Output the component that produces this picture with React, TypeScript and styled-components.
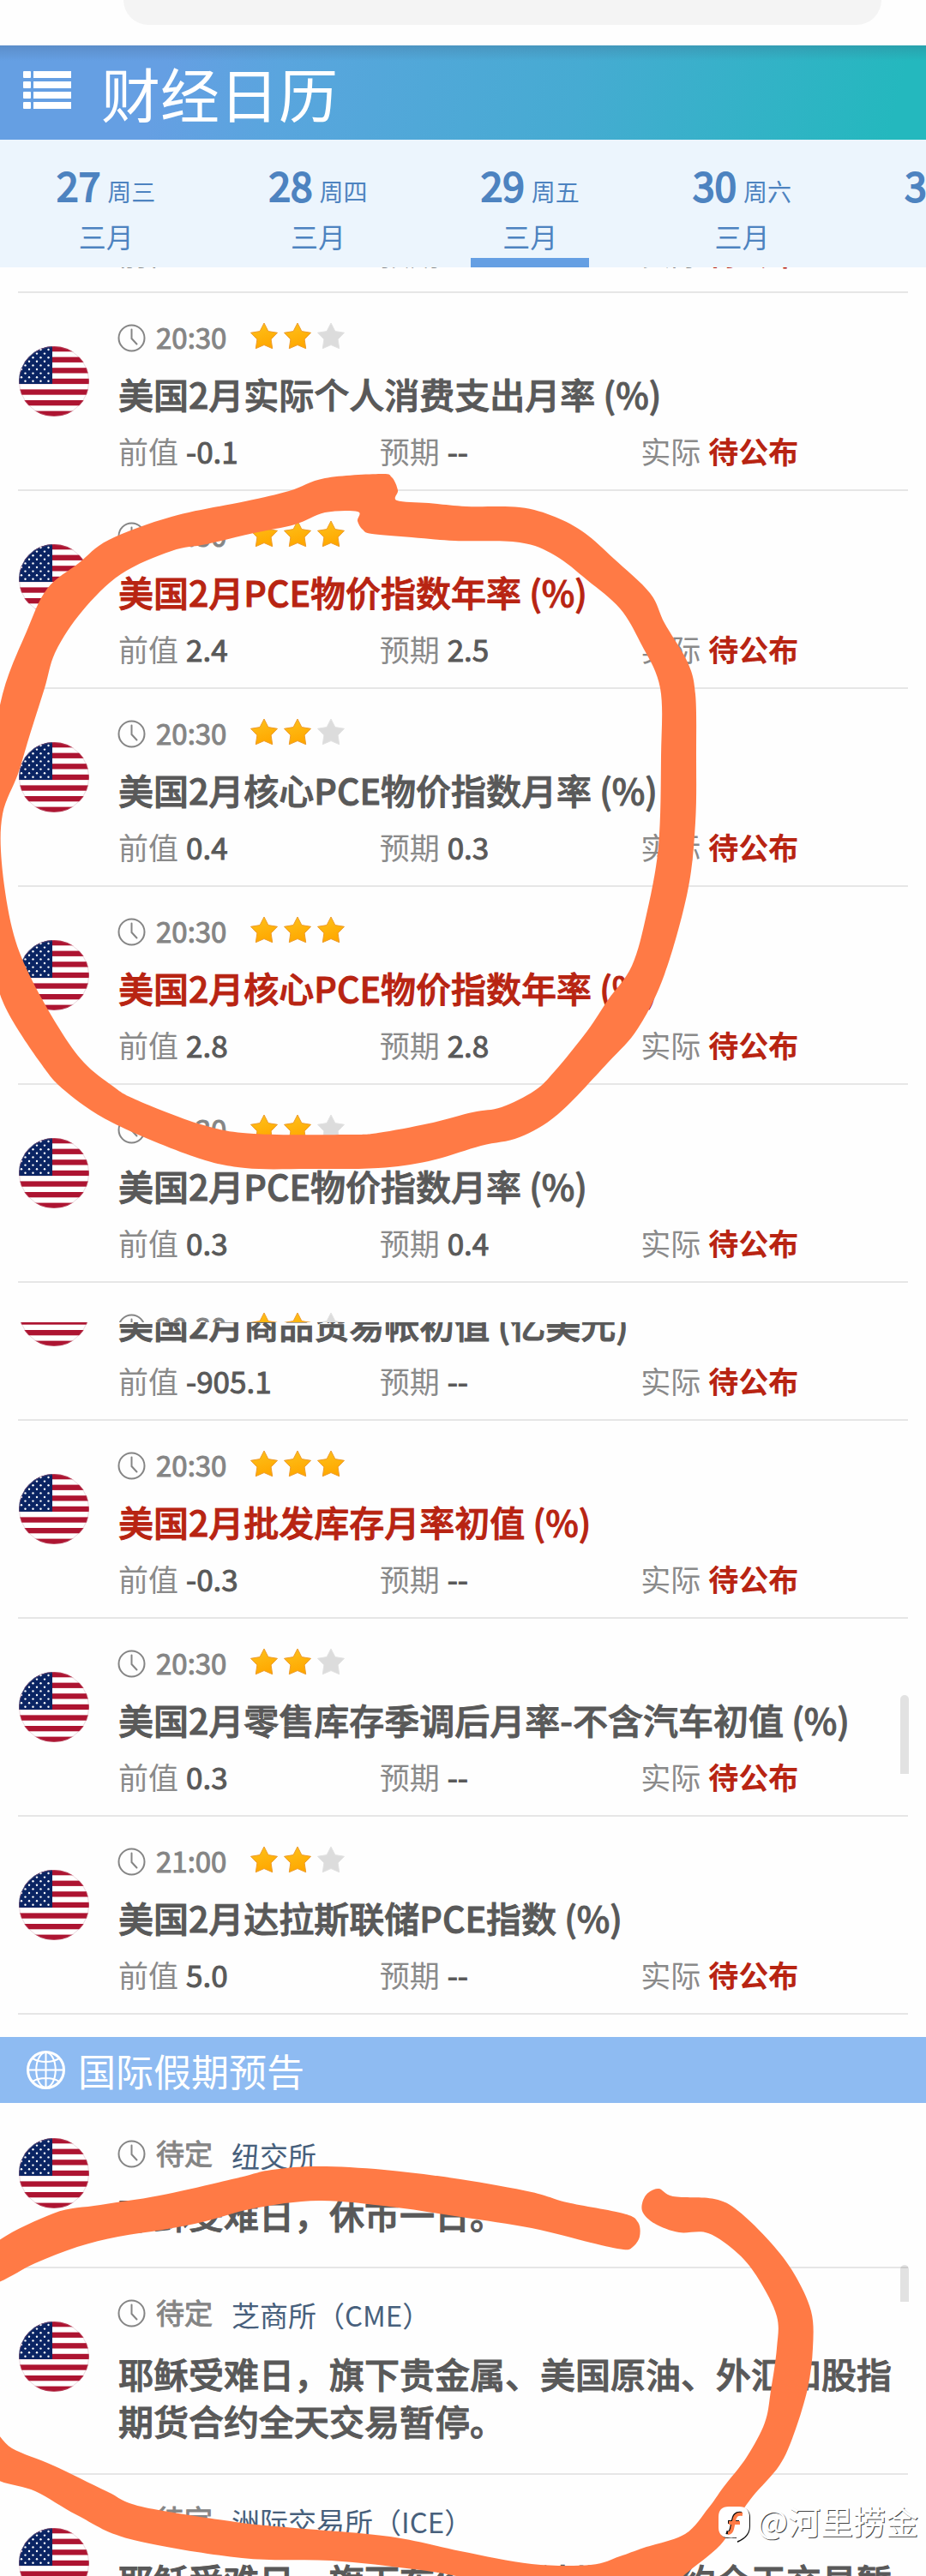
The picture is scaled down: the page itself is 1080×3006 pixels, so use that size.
import React from 'react';
import styled, { createGlobalStyle } from 'styled-components';

const GlobalStyle = createGlobalStyle`
  * { box-sizing: border-box; }
  body {
    margin: 0;
    background: #fefefe;
    font-family: "Noto Sans CJK SC", "Noto Sans", sans-serif;
    color: #595959;
  }
  button, input { font: inherit; color: inherit; border: 0; background: none; padding: 0; margin: 0; }
  h1, h2, h3, p, dl, dd { margin: 0; font-weight: inherit; }
`;

const Page = styled.div`
  position: relative;
  display: flex;
  flex-direction: column;
  height: 100vh;
  overflow: hidden;
`;

const AddressBar = styled.div`
  flex: none;
  height: 53px;
  padding: 0 52px 0 144px;
`;

const AddressInput = styled.input`
  display: block;
  width: 100%;
  height: 29px;
  border-radius: 0 0 30px 30px;
  background: #f4f4f4;
`;

const Header = styled.header`
  flex: none;
  display: flex;
  align-items: center;
  gap: 35px;
  height: 110px;
  padding: 0 27px;
  color: #fff;
  background:
    linear-gradient(180deg, rgba(60, 80, 110, 0.22), rgba(60, 80, 110, 0) 18px),
    linear-gradient(105deg, #659fe3 18%, #5aa5de 30%, #46abd2 62%, #24b8be 96%);
`;

const MenuButton = styled.button`
  display: flex;
  padding-bottom: 6px;
`;

const PageTitle = styled.h1`
  font-size: 69px;
  line-height: 98px;
`;

const DateTabs = styled.nav`
  flex: none;
  display: flex;
  height: 149px;
  overflow: hidden;
  background: #ecf5fd;
`;

const DateTab = styled.button`
  flex: 0 0 22.9%;
  display: flex;
  flex-direction: column;
  align-items: center;
  padding-top: 27px;
  color: #4d83c0;
`;

const DayLine = styled.span`
  flex: none;
  display: flex;
  align-items: baseline;
  gap: 8px;
  height: 50px;
  font-size: 28px;
  line-height: 50px;
`;

const DayNumber = styled.span`
  font-size: 46px;
  -webkit-text-stroke: 2px currentColor;
`;

const MonthLine = styled.span`
  flex: none;
  margin-top: 13px;
  font-size: 32px;
  line-height: 44px;
`;

const TabMarker = styled.span`
  flex: none;
  width: 138px;
  height: 11px;
  margin-top: auto;
  background: #659fe3;
`;

const List = styled.div`
  flex: none;
  padding: 0 21px;
`;

const Slice = styled.div<{ $height: number; $end?: boolean }>`
  display: flex;
  flex-direction: column;
  justify-content: ${(p) => (p.$end ? 'flex-end' : 'flex-start')};
  height: ${(p) => p.$height}px;
  overflow: hidden;
`;

const Item = styled.article`
  flex: none;
  display: flex;
  align-items: center;
  gap: 34px;
  padding: 28px 7px 23px 1px;
  border-bottom: 2px solid #e6e6e6;
`;

const HolidayItem = styled(Item)`
  padding-bottom: 34px;
`;

const FlagBox = styled.div`
  flex: none;
  display: flex;
  margin-bottom: 28px;
`;

const Body = styled.div`
  flex: 1;
  min-width: 0;
`;

const Meta = styled.div`
  display: flex;
  align-items: center;
  height: 48px;
  font-size: 33px;
  line-height: 48px;
  color: #858585;
`;

const Time = styled.span`
  margin: 0 0 2px 12px;
  -webkit-text-stroke: 1px currentColor;
`;

const Stars = styled.span`
  display: flex;
  gap: 7px;
  margin: 0 0 4px 28px;
`;

const Exchange = styled.span`
  margin: 4px 0 0 22px;
  color: #47607c;
`;

const Title = styled.h3<{ $hot?: boolean }>`
  margin: 14px 0 17px;
  font-size: 41px;
  line-height: 55px;
  font-weight: 500;
  -webkit-text-stroke: 1px currentColor;
  color: ${(p) => (p.$hot ? '#b82412' : '#595959')};
`;

const HolidayTitle = styled(Title)`
  margin: 19px 0 0;
`;

const Values = styled.dl`
  display: grid;
  grid-template-columns: repeat(3, 1fr);
  font-size: 35px;
  line-height: 44px;
`;

const Pair = styled.div`
  display: flex;
  gap: 9px;
`;

const Label = styled.dt`
  color: #8a8a8a;
`;

const Value = styled.dd<{ $hot?: boolean }>`
  font-weight: ${(p) => (p.$hot ? 700 : 400)};
  -webkit-text-stroke: ${(p) => (p.$hot ? '0' : '1px currentColor')};
  color: ${(p) => (p.$hot ? '#b82412' : '#595959')};
`;

const SectionBar = styled.div`
  flex: none;
  display: flex;
  align-items: center;
  gap: 15px;
  height: 77px;
  margin: 26px 0 7px;
  padding: 0 31px;
  color: #fff;
  background: #8ebbf2;
`;

const SectionTitle = styled.h2`
  font-size: 44px;
  line-height: 66px;
`;

const HolidayList = styled.div`
  flex: 1;
  min-height: 0;
  overflow: hidden;
  padding: 0 21px;
`;

const ScrollThumb = styled.div<{ $top: number; $height: number }>`
  position: absolute;
  top: ${(p) => p.$top}px;
  right: 20px;
  width: 10px;
  height: ${(p) => p.$height}px;
  border-radius: 5px 5px 0 0;
  background: rgba(0, 0, 0, 0.11);
`;

const Drawing = styled.svg`
  position: absolute;
  top: 0;
  left: 0;
  pointer-events: none;
`;

const Watermark = styled.div`
  position: absolute;
  right: 9px;
  bottom: 26px;
  display: flex;
  align-items: center;
  gap: 5px;
  font-size: 38px;
  line-height: 54px;
  color: #fff;
  text-shadow: 1px 1px 0 #444;
`;

const WatermarkName = styled.span`
  padding-bottom: 12px;
`;

const ListIcon = () => (
  <svg width="56" height="44" viewBox="0 0 56 44" fill="#fff" aria-hidden="true">
    {[0, 12, 24, 36].map((y) => (
      <g key={y}>
        <rect x="0" y={y} width="9" height="8" rx="1" />
        <rect x="12" y={y} width="44" height="8" />
      </g>
    ))}
  </svg>
);

const ClockSvg = styled.svg`
  flex: none;
  margin-left: -1px;
`;

const ClockIcon = () => (
  <ClockSvg width="33" height="33" viewBox="0 0 33 33" fill="none" stroke="#858585" strokeWidth="2" strokeLinecap="round" aria-hidden="true">
    <circle cx="16.5" cy="16.5" r="15" />
    <path d="M16.5 6.5V17l6 6.500" />
  </ClockSvg>
);

const GlobeIcon = () => (
  <svg width="45" height="45" viewBox="0 0 44 44" fill="none" stroke="#fff" strokeWidth="2" aria-hidden="true">
    <circle cx="22" cy="22" r="20.500" strokeWidth="3" />
    <ellipse cx="22" cy="22" rx="11" ry="20" />
    <path d="M22 2v40M2 22h40M7 9c8 5 22 5 30 0M7 35c8-5 22-5 30 0" />
  </svg>
);

const Star = ({ on }: { on: boolean }) => (
  <svg width="32" height="32" viewBox="0 0 32 32" aria-hidden="true">
    <defs>
      <linearGradient id="starGold" x1="0" y1="0" x2="0.3" y2="1">
        <stop offset="0" stopColor="#fdc21c" />
        <stop offset="1" stopColor="#ffa800" />
      </linearGradient>
    </defs>
    <path
      d="M16 1l4.900 9.600 10.600 1.700-7.400 7.600 1.600 10.800L16 26.500l-9.700 4.200 1.600-10.800L0.500 12.300l10.600-1.700z"
      fill={on ? 'url(#starGold)' : '#dcdcdc'}
      stroke={on ? '#ee9c2c' : '#e2e2e2'}
      strokeWidth="1"
      strokeLinejoin="round"
    />
  </svg>
);

const STRIPES = [0, 1, 2, 3, 4, 5, 6];

const UsFlag = () => (
  <svg width="82" height="82" viewBox="0 0 82 82" role="img" aria-label="美国">
    <defs>
      <clipPath id="flagRound">
        <circle cx="41" cy="41" r="41" />
      </clipPath>
    </defs>
    <g clipPath="url(#flagRound)">
      <rect width="82" height="82" fill="#fff" />
      {STRIPES.map((i) => (
        <rect key={i} y={i * 12.6} width="82" height="6.3" fill="#ad1431" />
      ))}
      <rect width="39" height="44" fill="#0a2463" />
      {[0, 1, 2, 3, 4, 5, 6, 7, 8].map((r) =>
        [0, 1, 2, 3].map((c) => (
          <circle key={`${r}-${c}`} cx={(r % 2 ? 3 : 7.500) + c * 9} cy={4 + r * 4.600} r="1.200" fill="#fff" />
        )),
      )}
    </g>
    <circle cx="41" cy="41" r="40.500" fill="none" stroke="#c9899b" strokeOpacity="0.35" />
  </svg>
);

type Pt = [number, number];

/* Closed Catmull-Rom curve through the marker's outline points. */
const outline = (pts: Pt[]) => {
  const n = pts.length;
  const at = (i: number) => pts[(i + n) % n];
  let d = `M${pts[0][0]} ${pts[0][1]}`;
  for (let i = 0; i < n; i++) {
    const [a, b, c, e] = [at(i - 1), at(i), at(i + 1), at(i + 2)];
    d += `C${b[0] + (c[0] - a[0]) / 6} ${b[1] + (c[1] - a[1]) / 6} ${c[0] - (e[0] - b[0]) / 6} ${c[1] - (e[1] - b[1]) / 6} ${c[0]} ${c[1]}`;
  }
  return `${d}Z`;
};

const RING: Pt[] = [
  [444, 553], [457, 557], [464, 572], [463, 584], [500, 587], [544, 591], [606, 592], [647, 603], [682, 622], [716, 652],
  [758, 692], [775, 727], [802, 773], [811, 810], [812, 880], [811, 960], [802, 1040], [775, 1137], [744, 1200],
  [709, 1240], [651, 1300], [606, 1327], [561, 1337], [500, 1355], [441, 1363], [360, 1364], [286, 1363], [227, 1350],
  [131, 1310], [76, 1273], [47, 1240], [7, 1177], [-6, 1130], [-14, 1040], [-10, 900], [3, 810], [31, 737], [55, 687],
  [92, 657], [127, 630], [200, 603], [286, 585], [337, 573], [379, 558],
];

const RING_HOLE: Pt[] = [
  [417, 597], [417, 608], [423, 618], [434, 623], [480, 627], [530, 631], [606, 633], [647, 648], [685, 677], [723, 710],
  [747, 750], [770, 803], [771, 883], [768, 987], [754, 1067], [737, 1127], [709, 1167], [685, 1203], [647, 1250],
  [623, 1273], [585, 1292], [551, 1298], [500, 1311], [441, 1322], [406, 1324], [296, 1323], [234, 1312], [158, 1283],
  [131, 1267], [98, 1240], [69, 1200], [34, 1137], [14, 1083], [2, 1007], [3, 950], [21, 903], [34, 860], [52, 803],
  [65, 760], [96, 713], [141, 670], [200, 643], [241, 635], [296, 622], [344, 612], [379, 598],
];

const ARC: Pt[] = [
  [-10, 2622], [62, 2583], [117, 2573], [186, 2562], [275, 2542], [317, 2532], [372, 2528], [448, 2532], [537, 2543],
  [620, 2558], [661, 2570], [727, 2583], [744, 2593], [746, 2610], [738, 2622], [727, 2625], [689, 2617], [620, 2600],
  [537, 2587], [455, 2575], [372, 2568], [296, 2577], [240, 2592], [190, 2602], [138, 2610], [90, 2622], [41, 2641], [-10, 2664],
];

const HOOK: Pt[] = [
  [768, 2554], [785, 2563], [833, 2566], [861, 2580], [899, 2617], [926, 2653], [946, 2697], [948, 2740], [942, 2787],
  [926, 2840], [909, 2877], [878, 2913], [861, 2937], [840, 2970], [799, 3004], [770, 3030], [640, 3030], [537, 3007],
  [482, 2998], [386, 2988], [282, 2985], [152, 2963], [90, 2935], [41, 2907], [-10, 2888], [-10, 2836], [14, 2857],
  [62, 2877], [124, 2907], [165, 2925], [275, 2943], [344, 2950], [455, 2960], [537, 2977], [620, 2992], [689, 2993],
  [723, 2983], [751, 2973], [799, 2957], [826, 2927], [844, 2902], [871, 2867], [892, 2827], [899, 2790], [906, 2740],
  [906, 2703], [885, 2660], [861, 2630], [826, 2606], [792, 2605], [764, 2595], [749, 2580], [753, 2562],
];

const TABS = [
  { day: '27', week: '周三', month: '三月' },
  { day: '28', week: '周四', month: '三月' },
  { day: '29', week: '周五', month: '三月' },
  { day: '30', week: '周六', month: '三月' },
  { day: '31', week: '周日', month: '三月' },
];

type EventData = { time: string; stars: number; title: string; prev: string; expect: string };

const ev = (time: string, stars: number, title: string, prev: string, expect: string): EventData => ({
  time, stars, title, prev, expect,
});

const TOP_EVENT = ev('20:30', 2, '美国2月个人支出月率 (%)', '0.2', '--');
const TRADE_EVENT = ev('20:30', 2, '美国2月商品贸易帐初值 (亿美元)', '-905.1', '--');
const FIRST_EVENTS = [
  ev('20:30', 2, '美国2月实际个人消费支出月率 (%)', '-0.1', '--'),
  ev('20:30', 3, '美国2月PCE物价指数年率 (%)', '2.4', '2.5'),
  ev('20:30', 2, '美国2月核心PCE物价指数月率 (%)', '0.4', '0.3'),
  ev('20:30', 3, '美国2月核心PCE物价指数年率 (%)', '2.8', '2.8'),
  ev('20:30', 2, '美国2月PCE物价指数月率 (%)', '0.3', '0.4'),
];
const LATER_EVENTS = [
  ev('20:30', 3, '美国2月批发库存月率初值 (%)', '-0.3', '--'),
  ev('20:30', 2, '美国2月零售库存季调后月率-不含汽车初值 (%)', '0.3', '--'),
  ev('21:00', 2, '美国2月达拉斯联储PCE指数 (%)', '5.0', '--'),
];
const HOLIDAYS = [
  { place: '纽交所', title: '耶稣受难日，休市一日。' },
  { place: '芝商所（CME）', title: '耶稣受难日，旗下贵金属、美国原油、外汇和股指期货合约全天交易暂停。' },
  { place: '洲际交易所（ICE）', title: '耶稣受难日，旗下布伦特原油期货合约全天交易暂停。' },
];

const EventRow = ({ data }: { data: EventData }) => (
  <Item>
    <FlagBox><UsFlag /></FlagBox>
    <Body>
      <Meta>
        <ClockIcon />
        <Time>{data.time}</Time>
        <Stars>
          {[1, 2, 3].map((n) => <Star key={n} on={n <= data.stars} />)}
        </Stars>
      </Meta>
      <Title $hot={data.stars === 3}>{data.title}</Title>
      <Values>
        <Pair><Label>前值</Label><Value>{data.prev}</Value></Pair>
        <Pair><Label>预期</Label><Value>{data.expect}</Value></Pair>
        <Pair><Label>实际</Label><Value $hot>待公布</Value></Pair>
      </Values>
    </Body>
  </Item>
);

export default function App() {
  const [active, setActive] = React.useState(2);
  return (
    <>
      <GlobalStyle />
      <Page>
        <AddressBar><AddressInput aria-label="地址栏" /></AddressBar>
        <Header>
          <MenuButton type="button" aria-label="菜单"><ListIcon /></MenuButton>
          <PageTitle>财经日历</PageTitle>
        </Header>
        <DateTabs>
          {TABS.map((t, i) => (
            <DateTab key={t.day} type="button" onClick={() => setActive(i)}>
              <DayLine><DayNumber>{t.day}</DayNumber>{t.week}</DayLine>
              <MonthLine>{t.month}</MonthLine>
              {i === active && <TabMarker />}
            </DateTab>
          ))}
        </DateTabs>
        <List>
          <Slice $height={30} $end><EventRow data={TOP_EVENT} /></Slice>
          {FIRST_EVENTS.map((e) => <EventRow key={e.title} data={e} />)}
          <Slice $height={46}><EventRow data={TRADE_EVENT} /></Slice>
          <Slice $height={115} $end><EventRow data={TRADE_EVENT} /></Slice>
          {LATER_EVENTS.map((e) => <EventRow key={e.title} data={e} />)}
        </List>
        <SectionBar>
          <GlobeIcon />
          <SectionTitle>国际假期预告</SectionTitle>
        </SectionBar>
        <HolidayList>
          {HOLIDAYS.map((h) => (
            <HolidayItem key={h.place}>
              <FlagBox><UsFlag /></FlagBox>
              <Body>
                <Meta>
                  <ClockIcon />
                  <Time>待定</Time>
                  <Exchange>{h.place}</Exchange>
                </Meta>
                <HolidayTitle>{h.title}</HolidayTitle>
              </Body>
            </HolidayItem>
          ))}
        </HolidayList>
        <ScrollThumb $top={1978} $height={92} />
        <ScrollThumb $top={2643} $height={43} />
        <Drawing width="1080" height="3006" viewBox="0 0 1080 3006" fill="#ff7a45" aria-hidden="true">
          <path fillRule="evenodd" d={outline(RING) + outline(RING_HOLE)} />
          <path d={outline(ARC)} />
          <path d={outline(HOOK)} />
        </Drawing>
        <Watermark>
          <svg width="40" height="46" viewBox="0 0 40 46" aria-hidden="true">
            <path d="M22 43c7-3 15-8 15-19V14C37 6 33 2 25 2H12C4 2 1 6 1 14v12c0 6 3 11 9 12h12z" fill="#111" />
            <path d="M20 42c6-2 16-7 16-18V13C36 5 32 1 24 1H12C4 1 0 5 0 13v12c0 7 3 11 9 12 5 1 12 0 12 0z" fill="#fff" />
            <path d="M27 9c-7-1-9 2-10 8l-2 9c-1 5-3 6-6 5M11 19h13" fill="none" stroke="#111" strokeWidth="4" />
            <path d="M28 10c-7-1-9 2-10 8l-2 9c-1 4-2 5-5 5M12 20h13" fill="none" stroke="#ff7a45" strokeWidth="4" />
          </svg>
          <WatermarkName>@河里捞金</WatermarkName>
        </Watermark>
      </Page>
    </>
  );
}
